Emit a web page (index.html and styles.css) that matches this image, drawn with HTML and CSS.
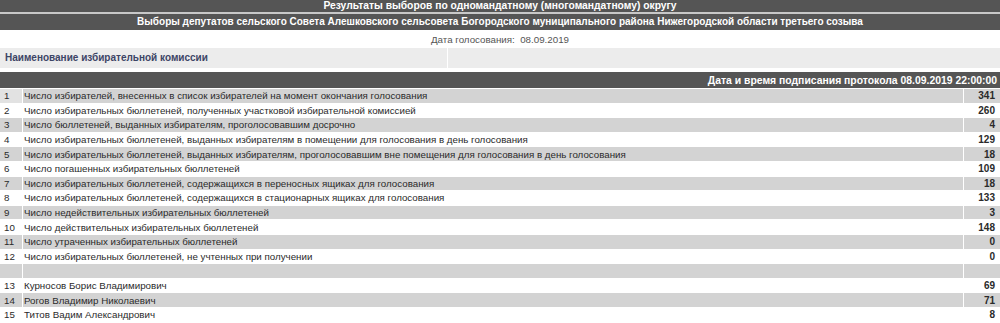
FILE: index.html
```html
<!DOCTYPE html>
<html lang="ru">
<head>
<meta charset="utf-8">
<title>Результаты выборов</title>
<link rel="stylesheet" href="styles.css">
</head>
<body>
<div class="page">
  <div class="title title-main">Результаты выборов по одномандатному (многомандатному) округу</div>
  <div class="title title-sub">Выборы депутатов сельского Совета Алешковского сельсовета Богородского муниципального района Нижегородской области третьего созыва</div>
  <div class="date-line">Дата голосования:&nbsp;&nbsp;08.09.2019</div>
  <div class="commission">
    <div class="commission-name">Наименование избирательной комиссии</div>
    <div class="commission-value"></div>
  </div>
  <table class="results">
    <tr class="head"><td colspan="3">Дата и время подписания протокола 08.09.2019 22:00:00</td></tr>
    <tr class="odd"><td class="num first">1</td><td class="label">Число избирателей, внесенных в список избирателей на момент окончания голосования</td><td class="val">341</td></tr>
    <tr><td class="num">2</td><td class="label">Число избирательных бюллетеней, полученных участковой избирательной комиссией</td><td class="val">260</td></tr>
    <tr class="odd"><td class="num">3</td><td class="label">Число бюллетеней, выданных избирателям, проголосовавшим досрочно</td><td class="val">4</td></tr>
    <tr><td class="num">4</td><td class="label">Число избирательных бюллетеней, выданных избирателям в помещении для голосования в день голосования</td><td class="val">129</td></tr>
    <tr class="odd"><td class="num">5</td><td class="label">Число избирательных бюллетеней, выданных избирателям, проголосовавшим вне помещения для голосования в день голосования</td><td class="val">18</td></tr>
    <tr><td class="num">6</td><td class="label">Число погашенных избирательных бюллетеней</td><td class="val">109</td></tr>
    <tr class="odd"><td class="num">7</td><td class="label">Число избирательных бюллетеней, содержащихся в переносных ящиках для голосования</td><td class="val">18</td></tr>
    <tr><td class="num">8</td><td class="label">Число избирательных бюллетеней, содержащихся в стационарных ящиках для голосования</td><td class="val">133</td></tr>
    <tr class="odd"><td class="num">9</td><td class="label">Число недействительных избирательных бюллетеней</td><td class="val">3</td></tr>
    <tr><td class="num">10</td><td class="label">Число действительных избирательных бюллетеней</td><td class="val">148</td></tr>
    <tr class="odd"><td class="num">11</td><td class="label">Число утраченных избирательных бюллетеней</td><td class="val">0</td></tr>
    <tr><td class="num">12</td><td class="label">Число избирательных бюллетеней, не учтенных при получении</td><td class="val">0</td></tr>
    <tr class="odd"><td class="num"></td><td class="label"></td><td class="val"></td></tr>
    <tr><td class="num">13</td><td class="label">Курносов Борис Владимирович</td><td class="val">69</td></tr>
    <tr class="odd"><td class="num">14</td><td class="label">Рогов Владимир Николаевич</td><td class="val">71</td></tr>
    <tr><td class="num">15</td><td class="label">Титов Вадим Александрович</td><td class="val">8</td></tr>
  </table>
</div>
</body>
</html>
```

FILE: styles.css
```css
html, body {
  margin: 0;
  padding: 0;
  background: #ffffff;
}

.page {
  font-family: "Liberation Sans", Arial, sans-serif;
  font-size: 9.75px;
  color: #2a2a2a;
}

.title {
  background: #555555;
  color: #ffffff;
  font-weight: bold;
  font-size: 10px;
  text-align: center;
  line-height: 12px;
}

.title-main {
  height: 12px;
  font-size: 10.3px;
  border-bottom: 2px solid #c8c8c8;
}

.title-sub {
  height: 16px;
  line-height: 16px;
}

.date-line {
  height: 18px;
  line-height: 20px;
  text-align: center;
  color: #555555;
}

.commission {
  display: flex;
  height: 20px;
  gap: 1px;
}

.commission-name {
  width: 447px;
  background: #ececec;
  color: #3d4566;
  font-weight: bold;
  font-size: 10px;
  line-height: 20px;
  padding-left: 5px;
  box-sizing: border-box;
}

.commission-value {
  flex: 1;
  background: #ececec;
}

.results {
  margin-top: 4px;
  width: 100%;
  border-collapse: separate;
  border-spacing: 0;
}

.results td {
  padding: 0;
  height: 14.6px;
  line-height: 13px;
  border-top: 1px solid #ffffff;
  box-sizing: border-box;
  white-space: nowrap;
}

.results .head td {
  background: #555555;
  color: #ffffff;
  font-weight: bold;
  font-size: 10.4px;
  text-align: right;
  height: 16px;
  border-top: 0;
  padding-right: 3px;
}

.results .num {
  width: 23px;
  padding-left: 4px;
  border-right: 1px solid #ffffff;
}

.results .label {
  padding-left: 1px;
}

.results .val {
  width: 37px;
  text-align: right;
  font-weight: bold;
  font-size: 10px;
  padding-right: 5px;
  border-left: 1px solid #ffffff;
}

.results .odd td {
  background: #d3d3d3;
}

.results .odd td.first {
  background: #e2e2e2;
}
```
